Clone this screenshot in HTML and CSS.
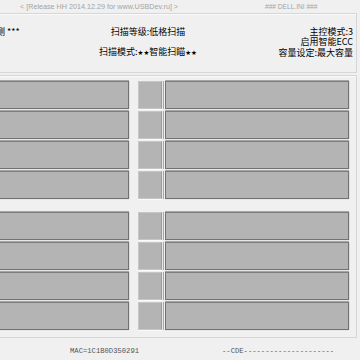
FILE: index.html
```html
<!DOCTYPE html>
<html>
<head>
<meta charset="utf-8">
<link rel="stylesheet" href="styles.css">
</head>
<body>
<div class="win">
  <div class="title">
    <span class="rel">&lt; [Release HH 2014.12.29 for www.USBDev.ru] &gt;</span>
    <span class="ini">### DELL.INI ###</span>
  </div>
  <div class="header">
    <div class="hl">测 ***</div>
    <div class="hc">
      <div>扫描等级:低格扫描</div>
      <div class="hc2">扫描模式:<span class="star">★★</span>智能扫瞄<span class="star">★★</span></div>
    </div>
    <div class="hr">
      <div>主控模式:3</div>
      <div>启用智能ECC</div>
      <div>容量设定:最大容量</div>
    </div>
  </div>
  <div class="main">
    <div class="group">
      <div class="bar lb"></div><div class="box"></div><div class="bar"></div>
      <div class="bar lb"></div><div class="box"></div><div class="bar"></div>
      <div class="bar lb"></div><div class="box"></div><div class="bar"></div>
      <div class="bar lb"></div><div class="box"></div><div class="bar"></div>
    </div>
    <div class="group g2">
      <div class="bar lb"></div><div class="box"></div><div class="bar"></div>
      <div class="bar lb"></div><div class="box"></div><div class="bar"></div>
      <div class="bar lb"></div><div class="box"></div><div class="bar"></div>
      <div class="bar lb"></div><div class="box"></div><div class="bar"></div>
    </div>
  </div>
  <div class="status">
    <span class="mac">MAC=1C1B0D350291</span>
    <span class="cde">--CDE---------------------</span>
  </div>
</div>
</body>
</html>
```

FILE: styles.css
```css
html, body {
  margin: 0;
  padding: 0;
  background: #f0f0f0;
}
.win {
  width: 360px;
  height: 360px;
  overflow: hidden;
  position: relative;
  font-family: "Noto Sans CJK SC", "Liberation Sans", sans-serif;
  color: #000;
}
.title {
  height: 13px;
  display: grid;
  grid-template-columns: 245px 1fr;
  padding-left: 20px;
  font-family: "Liberation Sans", sans-serif;
  font-size: 7.2px;
  line-height: 14px;
  color: #a4a4a4;
  white-space: nowrap;
}
.ini {
  font-size: 6.6px;
}
.header {
  box-sizing: border-box;
  margin-left: -20px;
  width: 377px;
  height: 60px;
  border: 1px solid #d6d6d6;
  box-shadow: inset 1px 1px 0 #fafafa;
  padding: 13px 3px 0 15px;
  display: grid;
  grid-template-columns: 80px 144px 1fr;
  font-size: 9px;
  line-height: 10.4px;
  white-space: nowrap;
}
.hc {
  text-align: center;
}
.hc2 {
  margin-top: 9.6px;
}
.star {
  font-family: "DejaVu Sans", sans-serif;
  font-size: 6.5px;
}
.hr {
  text-align: right;
}
.main {
  box-sizing: border-box;
  margin-top: 2px;
  margin-left: -20px;
  width: 377px;
  height: 263px;
  border: 1px solid #d6d6d6;
  box-shadow: inset 1px 1px 0 #fafafa;
  padding: 5px 7px 0 7px;
}
.group {
  display: grid;
  grid-template-columns: 150px 27px 184px;
  grid-auto-rows: 28px;
  row-gap: 2px;
}
.g2 {
  margin-top: 13px;
}
.bar {
  box-sizing: border-box;
  background: #b4b4b4;
  border: 1px solid #727272;
  border-top-color: #7e7e7e;
  box-shadow: 0 -1px 0 #a6a6a6, 0 1px 0 #e6e6e6, 1px 0 0 #dedede;
}
.lb {
  width: 141px;
}
.box {
  box-sizing: border-box;
  width: 24px;
  background: #b4b4b4;
  border: 1px solid #c6c6c6;
  border-right-color: #9c9c9c;
  box-shadow: 0 1px 0 #fbfbfb, 1px 0 0 #e8e8e8, 2px 0 0 #a8a8a8;
}
.status {
  box-sizing: border-box;
  height: 22px;
  padding: 2px 0 0 70px;
  display: grid;
  grid-template-columns: 152px 1fr;
  font-family: "Liberation Mono", monospace;
  font-size: 7.2px;
  line-height: 22px;
  color: #555;
  white-space: nowrap;
}
```
